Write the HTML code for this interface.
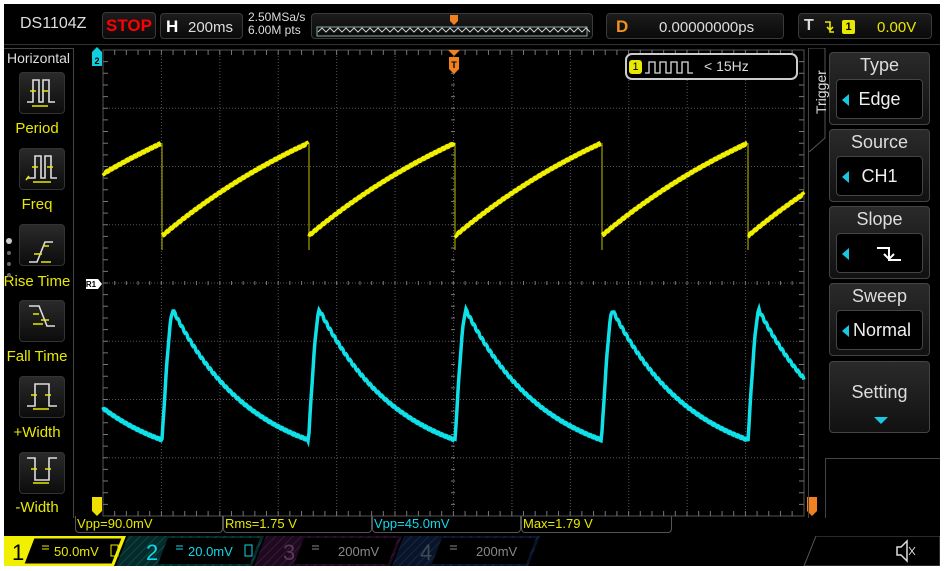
<!DOCTYPE html>
<html><head><meta charset="utf-8"><style>
*{margin:0;padding:0;box-sizing:border-box}
body{width:945px;height:571px;background:#fff;position:relative;overflow:hidden;font-family:"Liberation Sans",sans-serif}
#scr{position:absolute;left:4px;top:4px;width:936px;height:562px;background:#000}
.a{position:absolute}
.box{position:absolute;border:1px solid #3a3a3a;border-radius:4px;background:linear-gradient(#1c1c1c,#0a0a0a)}
.lbl{position:absolute;color:#e8e800;font-size:15px;text-align:center;width:74px;left:0}
.btn{position:absolute;left:19px;width:46px;height:42px;border:1px solid #333;border-radius:4px;background:linear-gradient(#2a2a2a,#0c0c0c)}
.rb{position:absolute;left:829px;width:101px;border:1px solid #444;border-radius:4px;background:linear-gradient(#2a2a2a,#111)}
.rb .t{color:#ddd;font-size:18px;text-align:center;margin-top:2px}
.rb .in{position:absolute;left:6px;right:6px;top:26px;height:40px;border:1px solid #444;border-radius:4px;background:#000;color:#eee;font-size:18px;text-align:center;line-height:38px}
.tri{position:absolute;left:5px;top:14px;width:0;height:0;border-top:6px solid transparent;border-bottom:6px solid transparent;border-right:7px solid #19c8e0}
.m{position:absolute;top:516px;height:17px;border:1px solid #555;border-top:none;border-radius:0 0 4px 4px;font-size:13px;line-height:16px;padding-left:1px}
</style></head><body>
<div id="scr"></div>
<!-- top bar -->
<div class="a" style="left:20px;top:15px;color:#ddd;font-size:16px">DS1104Z</div>
<div class="box" style="left:102px;top:12px;width:54px;height:27px;color:#f00;font-weight:bold;font-size:17px;text-align:center;line-height:25px">STOP</div>
<div class="box" style="left:160px;top:13px;width:83px;height:26px"><span class="a" style="left:5px;top:3px;color:#fff;font-weight:bold;font-size:17px">H</span><span class="a" style="left:27px;top:5px;color:#ddd;font-size:15px">200ms</span></div>
<div class="a" style="left:248px;top:11px;color:#ddd;font-size:12px;line-height:13px">2.50MSa/s<br>6.00M pts</div>
<div class="box" style="left:311px;top:13px;width:282px;height:26px"></div>
<svg class="a" style="left:315px;top:14px" width="275" height="24"><path d="M135 1h8v6l-4 4-4-4z" fill="#f08020"/><rect x="2" y="13" width="270" height="9" fill="none" stroke="#8aa" stroke-width="1"/><path id="zz" d="" fill="none" stroke="#ccc" stroke-width="1"/></svg>
<div class="box" style="left:606px;top:13px;width:178px;height:26px"><span class="a" style="left:9px;top:3px;color:#f09020;font-weight:bold;font-size:17px">D</span><span class="a" style="left:52px;top:5px;color:#ddd;font-size:15px">0.00000000ps</span></div>
<div class="box" style="left:798px;top:13px;width:134px;height:26px"><span class="a" style="left:5px;top:3px;color:#ddd;font-weight:bold;font-size:16px">T</span><svg class="a" style="left:24px;top:5px" width="12" height="16"><path d="M2 3h5v10h4M4 8l3 3 3-3" fill="none" stroke="#e8e800" stroke-width="1.6"/></svg><span class="a" style="left:43px;top:6px;width:13px;height:14px;background:#e8e800;border-radius:2px;font-size:11px;font-weight:bold;text-align:center;line-height:14px">1</span><span class="a" style="left:78px;top:5px;color:#e8e800;font-size:15px">0.00V</span></div>
<div class="a" style="left:4px;top:44px;width:936px;height:1px;background:#333"></div>
<!-- left panel -->
<div class="a" style="left:4px;top:48px;width:70px;height:470px;border-right:1px solid #444;border-top:1px solid #444"></div>
<div class="a" style="left:7px;top:50px;color:#ddd;font-size:14px">Horizontal</div>
<div class="btn" style="top:72px"></div><div class="lbl" style="top:120px">Period</div>
<div class="btn" style="top:148px"></div><div class="lbl" style="top:196px">Freq</div>
<div class="btn" style="top:224px"></div><div class="lbl" style="top:273px">Rise Time</div>
<div class="btn" style="top:300px"></div><div class="lbl" style="top:348px">Fall Time</div>
<div class="btn" style="top:376px"></div><div class="lbl" style="top:424px">+Width</div>
<div class="btn" style="top:452px"></div><div class="lbl" style="top:499px">-Width</div>
<svg class="a" style="left:19px;top:72px" width="46" height="430" fill="none" stroke-width="1.6">
<g stroke="#ddd">
<path d="M8 30h6V8h6v22h4V8h6v22h6"/>
<path d="M8 106h8V84h6v22h4V84h6v22h6"/>
<path d="M10 190h8l8-20h8"/>
<path d="M10 234h10l8 20h8"/>
<path d="M8 334h8V312h14v22h8"/>
<path d="M8 386h8v22h14v-22h8"/>
</g>
<g stroke="#e8e800">
<path d="M11 19h6M23 19h6M13 34h16"/>
<path d="M13 95h6M28 95h6M14 110h18M7 108l3-4"/>
<path d="M15 182h8M24 174h6M22 190h10"/>
<path d="M14 242h6M22 248h8M14 252h10"/>
<path d="M12 323h6M26 323h6M14 337h16"/>
<path d="M12 397h6M26 397h6M14 411h16"/>
</g>
</svg>
<div class="a" style="left:6px;top:238px;width:6px;height:6px;border-radius:3px;background:#ccc"></div>
<div class="a" style="left:7px;top:251px;width:4px;height:4px;border-radius:2px;background:#666"></div>
<div class="a" style="left:7px;top:262px;width:4px;height:4px;border-radius:2px;background:#666"></div>
<div class="a" style="left:7px;top:273px;width:4px;height:4px;border-radius:2px;background:#666"></div>
<!-- grid -->
<svg class="a" style="left:0;top:0" width="945" height="571" id="g">
<rect x="103" y="50" width="701" height="466" fill="none" stroke="#555" stroke-width="1"/>
<g id="grid" stroke="#555" stroke-width="1" stroke-dasharray="1,2"></g>
<g id="ticks" stroke="#777" stroke-width="1"></g>
<path id="ch1v" fill="none" stroke="#a0a000" stroke-width="1.2"/>
<path id="ch1" fill="none" stroke="#f0f000" stroke-width="3.5"/>
<path id="ch2" fill="none" stroke="#10e0e8" stroke-width="3.5"/>
<path d="M92 52l5-5 5 5v14h-10z" fill="#10d0e0"/><text x="97" y="64" font-size="9" fill="#000" font-weight="bold" text-anchor="middle">2</text>
<path d="M448 50h12l-6 6zM449 57h10v12l-5 5-5-5z" fill="#f08020"/><text x="454" y="68" font-size="9" fill="#000" font-weight="bold" text-anchor="middle">T</text>
<path d="M86 279h12l4 5-4 5h-12z" fill="#fff"/><text x="91" y="287" font-size="8" fill="#000" font-weight="bold" text-anchor="middle">R1</text>
<path d="M92 497h10v14l-5 5-5-5z" fill="#f0e000"/>
<path d="M807 497h10v14l-5 5-5-5z" fill="#f08020"/>
</svg>
<!-- freq box -->
<div class="a" style="left:625px;top:53px;width:173px;height:27px;border:2px solid #ccc;border-radius:7px;background:#000"></div>
<div class="a" style="left:629px;top:60px;width:13px;height:14px;background:#e8e800;border-radius:3px;font-size:11px;text-align:center;line-height:14px">1</div>
<svg class="a" style="left:645px;top:58px" width="55" height="18"><path d="M0 15h4V4h6v11h5V4h6v11h5V4h6v11h5V4h6v11h5" fill="none" stroke="#ddd" stroke-width="1.3"/></svg>
<div class="a" style="left:704px;top:58px;color:#ddd;font-size:14px">&lt; 15Hz</div>
<!-- right panel -->
<div class="a" style="left:808px;top:48px;width:1px;height:470px;background:#444"></div>
<svg class="a" style="left:808px;top:48px" width="22" height="110"><path d="M1 0h16v90l-16 14" fill="none" stroke="#555"/></svg>
<div class="a" style="left:801px;top:86px;color:#ddd;font-size:14px;transform:rotate(-90deg);transform-origin:center;width:40px;text-align:center">Trigger</div>
<div class="rb" style="top:52px;height:73px"><div class="t">Type</div><div class="in"><i class="tri"></i>Edge</div></div>
<div class="rb" style="top:129px;height:73px"><div class="t">Source</div><div class="in"><i class="tri"></i>CH1</div></div>
<div class="rb" style="top:206px;height:73px"><div class="t">Slope</div><div class="in"><i class="tri"></i><svg style="position:absolute;left:38px;top:10px" width="28" height="20"><path d="M2 4h12v12h12M9 10l5 5 5-5" fill="none" stroke="#fff" stroke-width="2"/></svg></div></div>
<div class="rb" style="top:283px;height:73px"><div class="t">Sweep</div><div class="in"><i class="tri"></i>&nbsp;Normal</div></div>
<div class="rb" style="top:361px;height:72px"><div class="t" style="margin-top:20px">Setting</div><i style="position:absolute;left:44px;top:55px;border-left:7px solid transparent;border-right:7px solid transparent;border-top:7px solid #19c8e0"></i></div>
<div class="a" style="left:825px;top:458px;width:115px;height:60px;border-left:1px solid #444;border-top:1px solid #444"></div>
<!-- measurements -->
<div class="m" style="left:75px;width:148px;color:#e8e800">Vpp=90.0mV</div>
<div class="m" style="left:223px;width:149px;color:#e8e800">Rms=1.75 V</div>
<div class="m" style="left:372px;width:149px;color:#10d8e8">Vpp=45.0mV</div>
<div class="m" style="left:521px;width:151px;color:#e8e800">Max=1.79 V</div>
<!-- bottom bar -->
<svg class="a" style="left:4px;top:536px" width="936" height="30">
<defs><pattern id="h2" width="6" height="6" patternUnits="userSpaceOnUse" patternTransform="rotate(45)"><rect width="6" height="6" fill="#062a2a"/><path d="M0 0v6" stroke="#0a4a4a" stroke-width="2"/></pattern>
<pattern id="h3" width="6" height="6" patternUnits="userSpaceOnUse" patternTransform="rotate(45)"><rect width="6" height="6" fill="#1e0a1e"/><path d="M0 0v6" stroke="#3a163a" stroke-width="2"/></pattern>
<pattern id="h4" width="6" height="6" patternUnits="userSpaceOnUse" patternTransform="rotate(45)"><rect width="6" height="6" fill="#0a1428"/><path d="M0 0v6" stroke="#14284a" stroke-width="2"/></pattern></defs>
<path d="M0 0h122l-12 30H0z" fill="#f0f000"/>
<path d="M30 2h88l-10 26H20z" fill="#000" stroke="#f0f000"/>
<path d="M124 0h136l-12 30H112z" fill="url(#h2)"/>
<path d="M164 2h92l-10 26h-92z" fill="#000"/>
<path d="M262 0h136l-12 30H250z" fill="url(#h3)"/>
<path d="M300 2h94l-10 26h-94z" fill="#000"/>
<path d="M400 0h136l-12 30H388z" fill="url(#h4)"/>
<path d="M438 2h94l-10 26h-94z" fill="#000"/>
<path d="M812 0h124v30H800z" fill="#000" stroke="#555"/>
<text x="8" y="24" font-size="22" fill="#000">1</text>
<text x="142" y="24" font-size="22" fill="#10d8e8">2</text>
<text x="279" y="24" font-size="22" fill="#5a3a5a">3</text>
<text x="416" y="24" font-size="22" fill="#3a4a5a">4</text>
<g font-size="13"><text x="50" y="20" fill="#e8e800">50.0mV</text><text x="184" y="20" fill="#10d8e8">20.0mV</text><text x="334" y="20" fill="#888">200mV</text><text x="472" y="20" fill="#888">200mV</text></g>
<g stroke-width="1"><path d="M38 10h7M38 13h7" stroke="#e8e800"/><path d="M172 10h7M172 13h7" stroke="#10d8e8"/><path d="M308 10h7M308 13h7" stroke="#888"/><path d="M446 10h7M446 13h7" stroke="#888"/></g>
<rect x="107" y="9" width="7" height="11" fill="none" stroke="#e8e800"/><rect x="241" y="9" width="7" height="11" fill="none" stroke="#10d8e8"/>
<path d="M893 11h4l6-6v20l-6-6h-4z" fill="none" stroke="#ddd" stroke-width="1.5"/><path d="M905 11l6 8M911 11l-6 8" stroke="#ddd"/>
</svg>
<script>
var ns="http://www.w3.org/2000/svg";
var g=document.getElementById('grid'),t=document.getElementById('ticks'),s="",tk="";
for(var i=1;i<12;i++){var x=103+i*58.42;s+="M"+x+" 50V516";}
for(var j=1;j<8;j++){var y=50+j*58.25;s+="M103 "+y+"H804";}
var p=document.createElementNS(ns,'path');p.setAttribute('d',s);g.appendChild(p);
for(var i=1;i<60;i++){var x=103+i*11.68;tk+="M"+x+" 50v5M"+x+" 516v-5M"+x+" 281v4";}
for(var j=1;j<40;j++){var y=50+j*11.65;tk+="M103 "+y+"h5M804 "+y+"h-5M451 "+y+"h4";}
var q=document.createElementNS(ns,'path');q.setAttribute('d',tk);t.appendChild(q);
var P=146.5,x0=162-P,a="",b="",v="";
function f1(u){var k=0.6;return 236-93*(1-Math.exp(-k*u))/(1-Math.exp(-k));}
function f2(u){var k=1.7;return 440-130*(Math.exp(-k*u)-Math.exp(-k))/(1-Math.exp(-k));}
var first=true;
for(var x=103;x<=804;x+=1){var ph=((x-x0)%P+P)%P,u=ph/P;var y1=f1(u);
 if(ph<1&&x>104){v+="M"+x+" "+f1(0.999).toFixed(1)+"V250";first=true;}
 a+=(first?"M":"L")+x+" "+(y1+((x%4<2)?1:-1)).toFixed(1);first=false;
 var y2;var r=11;if(ph<r){var w=ph/r;y2=440-130*Math.sin(w*Math.PI/2)*(1-0.15*(1-w))}else{y2=f2((ph-r)/(P-r));}
 b+=(x==103?"M":"L")+x+" "+(y2+((x%4<2)?1:-1)).toFixed(1);
}
document.getElementById('ch1').setAttribute('d',a);document.getElementById('ch2').setAttribute('d',b);document.getElementById('ch1v').setAttribute('d',v);
var z="M3 18";for(var i=0;i<34;i++){z+="l4 -4l4 4";}document.getElementById('zz').setAttribute('d',z);
</script>
</body></html>
